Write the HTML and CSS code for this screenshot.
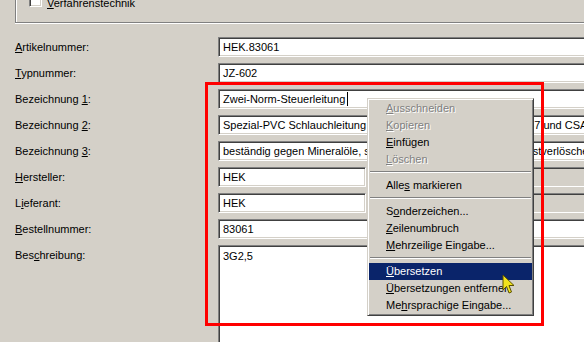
FILE: index.html
```html
<!DOCTYPE html>
<html>
    <head>
        <meta charset="utf-8" />
        <title>Artikel</title>
        <link rel="stylesheet" href="styles.css">
    </head>

    <body>
        <div class="screen">
            <!-- Gruppe oben -->
            <div class="group">
                <div class="check-row">
                    <span class="checkbox"></span>
                    <span class="check-label"><u>V</u>erfahrenstechnik</span>
                </div>
            </div>

            <!-- Formular -->
            <div class="form">
                <div class="label"><u>A</u>rtikelnummer:</div>
                <div class="edit wide">HEK.83061</div>

                <div class="label"><u>T</u>ypnummer:</div>
                <div class="edit wide">JZ-602</div>

                <div class="label">Bezeichnung <u>1</u>:</div>
                <div class="edit wide">Zwei-Norm-Steuerleitung<span class="caret"></span></div>

                <div class="label">Bezeichnung <u>2</u>:</div>
                <div class="edit wide">Spezial-PVC Schlauchleitung nach VDE, UL/CSA, UL-Style 2587 und CSA AWM I/II A/B</div>

                <div class="label">Bezeichnung <u>3</u>:</div>
                <div class="edit wide">beständig gegen Mineralöle, säurebeständig, flammwidrig,&thinsp; selbstverlöschend</div>

                <div class="label"><u>H</u>ersteller:</div>
                <div class="split">
                    <div class="edit short">HEK</div>
                    <div class="edit extra"></div>
                </div>

                <div class="label">L<u>i</u>eferant:</div>
                <div class="split">
                    <div class="edit short">HEK</div>
                    <div class="edit extra"></div>
                </div>

                <div class="label"><u>B</u>estellnummer:</div>
                <div class="edit wide">83061</div>

                <div class="label">Bes<u>c</u>hreibung:</div>
                <div class="edit memo">3G2,5</div>
            </div>

            <!-- Kontextmenue -->
            <div class="menu">
                <div class="item disabled"><u>A</u>usschneiden</div>
                <div class="item disabled"><u>K</u>opieren</div>
                <div class="item"><u>E</u>infügen</div>
                <div class="item disabled"><u>L</u>öschen</div>
                <div class="sep"></div>
                <div class="item">Alle<u>s</u> markieren</div>
                <div class="sep"></div>
                <div class="item">S<u>o</u>nderzeichen...</div>
                <div class="item"><u>Z</u>eilenumbruch</div>
                <div class="item"><u>M</u>ehrzeilige Eingabe...</div>
                <div class="sep"></div>
                <div class="item active"><u>Ü</u>bersetzen</div>
                <div class="item"><u>Ü</u>bersetzungen entfernen</div>
                <div class="item">Me<u>h</u>rsprachige Eingabe...</div>
            </div>

            <div class="mark"></div>

            <svg class="cursor" width="14" height="22" viewBox="0 0 14 22">
                <path d="M1 1 L1 16 L4.5 12.5 L7 19 L9.5 18 L7 11.5 L12 11.5 Z" fill="#f2e21c" stroke="#5a5000" stroke-width="1" stroke-linejoin="round" />
            </svg>
        </div>
    </body>
</html>
```

FILE: styles.css
```css
body {
    margin: 0;
    background: #d4d0c8;
    font-family: "Liberation Sans", Arial, sans-serif;
    font-size: 11px;
    color: #000;
}

.screen {
    position: relative;
    width: 584px;
    height: 342px;
    overflow: hidden;
}

u {
    text-decoration: underline;
    text-underline-offset: 1px;
}

/* Gruppe */
.group {
    display: flex;
    align-items: flex-start;
    margin-left: 15px;
    width: 700px;
    height: 22px;
    border-left: 1px solid #808080;
    border-bottom: 1px solid #808080;
    box-shadow: inset 1px 0 #fff, 0 1px #fff;
}

.check-row {
    display: flex;
    margin-top: -6px;
    margin-left: 13px;
}

.checkbox {
    width: 13px;
    height: 13px;
    box-sizing: border-box;
    background: #fff;
    border-top: 1px solid #808080;
    border-left: 1px solid #808080;
    border-bottom: 1px solid #fff;
    border-right: 1px solid #fff;
    box-shadow: inset 1px 1px #404040, inset -1px -1px #d4d0c8;
}

.check-label {
    margin-left: 5px;
    padding-top: 3px;
    line-height: 13px;
}

/* Formular */
.form {
    display: grid;
    grid-template-columns: 203px 420px;
    grid-auto-rows: 20px;
    row-gap: 6px;
    margin-top: 14px;
    padding-left: 15px;
}

.label {
    line-height: 20px;
    white-space: nowrap;
}

.edit {
    box-sizing: border-box;
    height: 20px;
    padding: 0 4px;
    line-height: 18px;
    white-space: nowrap;
    overflow: hidden;
    background: #fff;
    border-top: 1px solid #808080;
    border-left: 1px solid #808080;
    border-bottom: 1px solid #fff;
    border-right: 1px solid #fff;
    box-shadow: inset 1px 1px #404040, inset -1px -1px #d4d0c8;
}

.wide {
    width: 420px;
}

.split {
    display: flex;
    gap: 6px;
}

.short {
    width: 148px;
}

.extra {
    width: 260px;
    background: #d4d0c8;
}

.memo {
    height: 120px;
    padding-top: 4px;
    line-height: 13px;
}

.caret {
    display: inline-block;
    width: 1px;
    height: 14px;
    margin-left: 2px;
    background: #000;
    vertical-align: -3px;
}

/* Kontextmenue */
.menu {
    position: absolute;
    left: 367px;
    top: 98px;
    width: 167px;
    box-sizing: border-box;
    padding: 1px;
    background: #d4d0c8;
    border-top: 1px solid #d4d0c8;
    border-left: 1px solid #d4d0c8;
    border-right: 1px solid #404040;
    border-bottom: 1px solid #404040;
    box-shadow: inset 1px 1px #fff, inset -1px -1px #808080;
}

.item {
    height: 17px;
    line-height: 17px;
    padding-left: 17px;
    white-space: nowrap;
}

.item.disabled {
    color: #808080;
    text-shadow: 1px 1px 0 #fff;
}

.item.active {
    background: #0a246a;
    color: #fff;
}

.sep {
    height: 2px;
    margin: 3px 1px 4px 1px;
    border-top: 1px solid #808080;
    border-bottom: 1px solid #fff;
    box-sizing: border-box;
}

/* Markierung */
.mark {
    position: absolute;
    left: 205px;
    top: 82px;
    width: 333px;
    height: 238px;
    border: 3px solid #f00;
}

.cursor {
    position: absolute;
    left: 502px;
    top: 274px;
}
```
